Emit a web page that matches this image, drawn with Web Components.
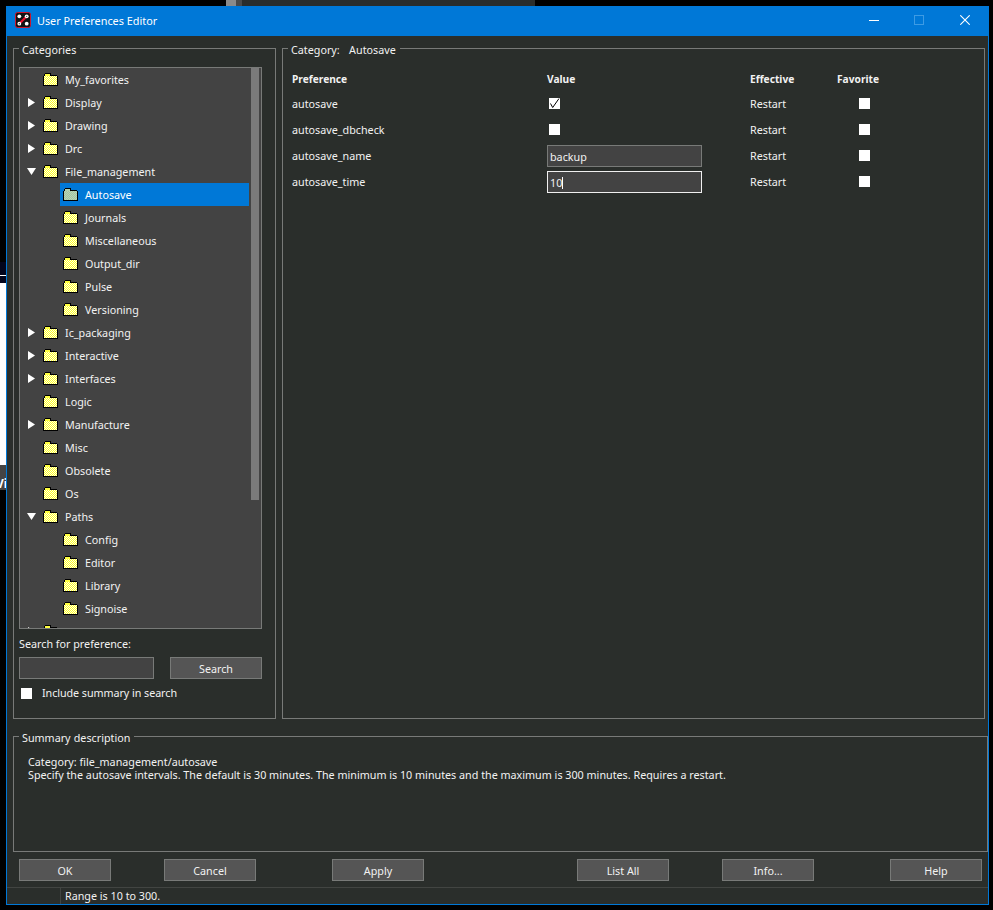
<!DOCTYPE html>
<html>
<head>
<meta charset="utf-8">
<title>User Preferences Editor</title>
<style>
  html, body { margin: 0; height: 100%; background: #000; overflow: hidden; }
  body { font: 10.75px/13px "Noto Sans", "Open Sans", sans-serif; color: #f2f2f2; }
</style>
</head>
<body>
<desktop-scraps></desktop-scraps>
<pref-window heading="User Preferences Editor">
  <group-box slot="left" label="Categories" style="height:678px">
    <cat-tree>
      <tree-row label="My_favorites"></tree-row>
      <tree-row label="Display" arrow="right"></tree-row>
      <tree-row label="Drawing" arrow="right"></tree-row>
      <tree-row label="Drc" arrow="right"></tree-row>
      <tree-row label="File_management" arrow="down"></tree-row>
      <tree-row label="Autosave" nested selected></tree-row>
      <tree-row label="Journals" nested></tree-row>
      <tree-row label="Miscellaneous" nested></tree-row>
      <tree-row label="Output_dir" nested></tree-row>
      <tree-row label="Pulse" nested></tree-row>
      <tree-row label="Versioning" nested></tree-row>
      <tree-row label="Ic_packaging" arrow="right"></tree-row>
      <tree-row label="Interactive" arrow="right"></tree-row>
      <tree-row label="Interfaces" arrow="right"></tree-row>
      <tree-row label="Logic"></tree-row>
      <tree-row label="Manufacture" arrow="right"></tree-row>
      <tree-row label="Misc"></tree-row>
      <tree-row label="Obsolete"></tree-row>
      <tree-row label="Os"></tree-row>
      <tree-row label="Paths" arrow="down"></tree-row>
      <tree-row label="Config" nested></tree-row>
      <tree-row label="Editor" nested></tree-row>
      <tree-row label="Library" nested></tree-row>
      <tree-row label="Signoise" nested></tree-row>
      <tree-row label="" arrow="right"></tree-row>
    </cat-tree>
    <search-panel></search-panel>
  </group-box>

  <group-box slot="right" label="Category:   Autosave" style="height:678px">
    <pref-table>
      <b>Preference</b><b>Value</b><b>Effective</b><b>Favorite</b>

      <span>autosave</span>
      <pref-check checked></pref-check>
      <span>Restart</span>
      <pref-check fav></pref-check>

      <span>autosave_dbcheck</span>
      <pref-check></pref-check>
      <span>Restart</span>
      <pref-check fav></pref-check>

      <span>autosave_name</span>
      <text-box>backup</text-box>
      <span>Restart</span>
      <pref-check fav></pref-check>

      <span>autosave_time</span>
      <text-box focused>10</text-box>
      <span>Restart</span>
      <pref-check fav></pref-check>
    </pref-table>
  </group-box>

  <group-box slot="summary" label="Summary description" style="height:123px">
    <summary-text>
      <div>Category: file_management/autosave</div>
      <div>Specify the autosave intervals. The default is 30 minutes. The minimum is 10 minutes and the maximum is 300 minutes. Requires a restart.</div>
    </summary-text>
  </group-box>

  <pref-button slot="buttons">OK</pref-button>
  <pref-button slot="buttons" style="margin-left:53px">Cancel</pref-button>
  <pref-button slot="buttons" style="margin-left:76px">Apply</pref-button>
  <pref-button slot="buttons" style="margin-left:153px">List All</pref-button>
  <pref-button slot="buttons" style="margin-left:53px">Info...</pref-button>
  <pref-button slot="buttons" style="margin-left:76px">Help</pref-button>

  <span slot="status">Range is 10 to 300.</span>
</pref-window>

<script>
// bits of other windows that stick out behind the dialog
class DesktopScraps extends HTMLElement {
  constructor() {
    super();
    this.attachShadow({ mode: "open" });
    this.shadowRoot.innerHTML = `
      <style>
        :host { display: block; position: absolute; inset: 0; overflow: hidden; }
        div { position: absolute; }
        .vi { left: -4px; top: 477px; width: 12px; height: 14px; overflow: hidden; font: bold 12px/14px "Noto Sans", sans-serif; color: #fff; }
      </style>
      <div style="left:226px;top:0;width:10px;height:6px;background:#8a8a8a"></div>
      <div style="left:236px;top:0;width:6px;height:6px;background:#4a4a4a"></div>
      <div style="left:242px;top:0;width:293px;height:6px;background:#2a2d2b"></div>
      <div style="left:0;top:262px;width:6px;height:21px;background:#03051c"></div>
      <div style="left:0;top:275px;width:6px;height:1px;background:#fff"></div>
      <div style="left:0;top:283px;width:6px;height:182px;background:#fff"></div>
      <div style="left:0;top:465px;width:6px;height:25px;background:#444"></div>
      <div class="vi">Vi</div>
    `;
  }
}
customElements.define("desktop-scraps", DesktopScraps);

class PrefWindow extends HTMLElement {
  constructor() {
    super();
    this.attachShadow({ mode: "open" });
    const template = document.createElement("template");
    template.innerHTML = `
      <style>
        :host {
          display: flex;
          flex-direction: column;
          position: relative;
          box-sizing: border-box;
          width: 983px;
          height: 899px;
          margin: 6px 0 0 6px;
          background: #2a2e2b;
          border: 1px solid #0078d7;
          border-top: 0;
        }
        .title {
          display: flex;
          align-items: center;
          height: 31px;
          margin: 0 -1px;
          padding-left: 9px;
          background: #0078d7;
          color: #fff;
          font-size: 10.85px;
        }
        .title svg.logo { margin-right: 6px; margin-top: -1px; }
        .title .name { flex: 1; }
        .ctl { display: block; margin-top: -2px; }
        .main {
          display: grid;
          grid-template-columns: 263px 703px;
          column-gap: 6px;
          padding: 5px 0 0 6px;
        }
        .summary { padding: 10px 0 0 6px; }
        .buttons { display: flex; padding: 7px 0 0 12px; }
        .status {
          display: flex;
          height: 17px;
          margin-top: 6px;
          border-top: 1px solid #424542;
          line-height: 16px;
        }
        .status .cell { width: 52px; border-right: 1px solid #424542; margin-left: 1px; }
        .status .msg { padding-left: 4px; }
      </style>
      <div class="title">
        <svg class="logo" width="16" height="16" viewBox="0 0 16 16">
          <rect x="0.5" y="0.5" width="15" height="15" rx="2" fill="#111" stroke="#d0142c"/>
          <path d="M12 4 4 12" stroke="#e8102c" stroke-width="2.2"/>
          <circle cx="4.3" cy="4.3" r="1.9" fill="#fff"/>
          <circle cx="11.7" cy="4.3" r="1.9" fill="#fff"/>
          <circle cx="4.3" cy="11.7" r="1.9" fill="#fff"/>
          <circle cx="11.7" cy="11.7" r="1.9" fill="#fff"/>
          <circle cx="11.7" cy="4.3" r=".6" fill="#333"/>
          <circle cx="4.3" cy="11.7" r=".6" fill="#333"/>
        </svg>
        <span class="name"></span>
        <svg class="ctl" width="10" height="10" viewBox="0 0 10 10" style="margin-right:35px"><path d="M0 5.5H10" stroke="#fff"/></svg>
        <svg class="ctl" width="10" height="10" viewBox="0 0 10 10" style="margin-right:36px"><rect x=".5" y=".5" width="9" height="9" fill="none" stroke="#3d9be4"/></svg>
        <svg class="ctl" width="10" height="10" viewBox="0 0 10 10" style="margin-right:19px"><path d="M.3.3 9.7 9.7M9.7.3.3 9.7" stroke="#fff" stroke-width="1.1"/></svg>
      </div>
      <div class="main"><slot name="left"></slot><slot name="right"></slot></div>
      <div class="summary"><slot name="summary"></slot></div>
      <div class="buttons"><slot name="buttons"></slot></div>
      <div class="status"><div class="cell"></div><div class="msg"><slot name="status"></slot></div></div>
    `;
    this.shadowRoot.appendChild(template.content.cloneNode(true));
  }

  connectedCallback() {
    this.shadowRoot.querySelector(".name").textContent = this.getAttribute("heading") || "";
  }
}
customElements.define("pref-window", PrefWindow);

class GroupBox extends HTMLElement {
  constructor() {
    super();
    this.attachShadow({ mode: "open" });
    this.shadowRoot.innerHTML = `
      <style>
        :host { display: block; box-sizing: border-box; }
        fieldset {
          box-sizing: border-box;
          height: 100%;
          min-width: 0;
          margin: 0;
          padding: 0 5px;
          border: 1px solid #787a78;
        }
        legend {
          padding: 2px 4px 0 3px;
          line-height: 14px;
          white-space: pre;
          word-spacing: .35px;
        }
      </style>
      <fieldset><legend></legend><slot></slot></fieldset>
    `;
  }

  connectedCallback() {
    this.shadowRoot.querySelector("legend").textContent = this.getAttribute("label") || "";
  }
}
customElements.define("group-box", GroupBox);

class CatTree extends HTMLElement {
  constructor() {
    super();
    this.attachShadow({ mode: "open" });
    this.shadowRoot.innerHTML = `
      <style>
        :host {
          display: flex;
          box-sizing: border-box;
          width: 243px;
          height: 562px;
          margin-top: 10px;
          background: #434343;
          border: 1px solid #787a78;
          overflow: hidden;
        }
        .rows { flex: 1; min-width: 0; }
        .bar { width: 8px; height: 432px; margin: 0 2px; background: #7a7a7a; }
      </style>
      <div class="rows"><slot></slot></div>
      <div class="bar"></div>
    `;
  }
}
customElements.define("cat-tree", CatTree);

class TreeRow extends HTMLElement {
  constructor() {
    super();
    this.attachShadow({ mode: "open" });
    this.shadowRoot.innerHTML = `
      <style>
        :host {
          display: flex;
          align-items: center;
          box-sizing: border-box;
          height: 23px;
          padding-left: 6px;
        }
        :host([nested]) { margin-left: 40px; padding-left: 3px; }
        :host([selected]) { background: #0078d7; color: #fff; }
        .arrow { width: 11px; height: 11px; margin-right: 6px; }
        :host([nested]) .arrow { display: none; }
        .folder { display: block; margin-right: 7px; }
        .text { margin-top: 2px; }
      </style>
      <svg class="arrow" viewBox="0 0 11 11"></svg>
      <svg class="folder" width="15" height="13" viewBox="0 0 15 13" shape-rendering="crispEdges">
        <defs>
          <pattern id="dither" width="2" height="2" patternUnits="userSpaceOnUse">
            <rect width="2" height="2" class="a"/>
            <rect width="1" height="1" class="b"/>
            <rect x="1" y="1" width="1" height="1" class="b"/>
          </pattern>
        </defs>
        <path d="M2 0H8V2H14V3H15V13H0V3H1V1H2Z" fill="#000"/>
        <rect x="2" y="1" width="5" height="2" class="tab"/>
        <rect x="1" y="3" width="13" height="9" fill="url(#dither)"/>
      </svg>
      <span class="text"></span>
    `;
  }

  connectedCallback() {
    const root = this.shadowRoot;
    root.querySelector(".text").textContent = this.getAttribute("label") || "";
    const arrow = this.getAttribute("arrow");
    if (arrow === "right") root.querySelector(".arrow").innerHTML = '<path d="M2 1 9 5.5 2 10Z" fill="#fff"/>';
    if (arrow === "down") root.querySelector(".arrow").innerHTML = '<path d="M1 2H10L5.5 9Z" fill="#fff"/>';

    // selected row gets the bluish dither, everything else is yellow on white
    const sel = this.hasAttribute("selected");
    root.querySelector(".a").setAttribute("fill", sel ? "#c0d8a8" : "#ffff20");
    root.querySelectorAll(".b").forEach(r => r.setAttribute("fill", sel ? "#98c0b0" : "#fffff0"));
    root.querySelector(".tab").setAttribute("fill", sel ? "#b0d0b0" : "#ffff40");
  }
}
customElements.define("tree-row", TreeRow);

class SearchPanel extends HTMLElement {
  constructor() {
    super();
    this.attachShadow({ mode: "open" });
    this.shadowRoot.innerHTML = `
      <style>
        :host { display: block; padding-top: 9px; }
        .row { display: flex; justify-content: space-between; margin-top: 6px; width: 243px; }
        .field { box-sizing: border-box; width: 135px; height: 22px; background: #434343; border: 1px solid #787a78; }
        .inc { display: flex; align-items: center; margin-top: 8px; padding-left: 2px; }
        .box { width: 11px; height: 11px; margin-right: 10px; background: #fff; }
        .inc span { letter-spacing: -.06px; }
      </style>
      <div>Search for preference:</div>
      <div class="row"><div class="field"></div><pref-button>Search</pref-button></div>
      <div class="inc"><div class="box"></div><span>Include summary in search</span></div>
    `;
  }
}
customElements.define("search-panel", SearchPanel);

class PrefButton extends HTMLElement {
  constructor() {
    super();
    this.attachShadow({ mode: "open" });
    this.shadowRoot.innerHTML = `
      <style>
        :host {
          display: flex;
          align-items: center;
          justify-content: center;
          box-sizing: border-box;
          flex: none;
          width: 92px;
          height: 22px;
          padding-top: 3px;
          background: #555;
          border: 1px solid #787a78;
          color: #f2f2f2;
        }
      </style>
      <slot></slot>
    `;
  }
}
customElements.define("pref-button", PrefButton);

class PrefTable extends HTMLElement {
  constructor() {
    super();
    this.attachShadow({ mode: "open" });
    this.shadowRoot.innerHTML = `
      <style>
        :host {
          display: grid;
          grid-template-columns: 255px 203px 87px 1fr;
          grid-template-rows: 24px repeat(4, 26px);
          align-items: center;
          padding: 11px 0 0 4px;
        }
        ::slotted(b) { font-weight: 700; font-size: 10.2px; }
      </style>
      <slot></slot>
    `;
  }
}
customElements.define("pref-table", PrefTable);

class PrefCheck extends HTMLElement {
  constructor() {
    super();
    this.attachShadow({ mode: "open" });
    this.shadowRoot.innerHTML = `
      <style>
        :host { display: block; width: 11px; height: 11px; margin: -2px 0 0 2px; background: #fff; }
        :host([fav]) { margin-left: 22px; }
        svg { display: block; }
      </style>
    `;
  }

  connectedCallback() {
    if (this.hasAttribute("checked")) {
      this.shadowRoot.innerHTML += '<svg width="11" height="11" viewBox="0 0 11 11"><path d="M1.5 5.5 3.7 9.5 10 .5" fill="none" stroke="#000"/></svg>';
    }
  }
}
customElements.define("pref-check", PrefCheck);

class TextBox extends HTMLElement {
  constructor() {
    super();
    this.attachShadow({ mode: "open" });
    this.shadowRoot.innerHTML = `
      <style>
        :host {
          display: flex;
          align-items: center;
          box-sizing: border-box;
          width: 155px;
          height: 22px;
          margin-top: -2px;
          padding: 3px 0 0 2px;
          background: #434343;
          border: 1px solid #787a78;
        }
        :host([focused]) { border-color: #f0f0f0; }
        .caret { display: none; width: 1px; height: 12px; background: #fff; }
        :host([focused]) .caret { display: block; }
      </style>
      <slot></slot><span class="caret"></span>
    `;
  }
}
customElements.define("text-box", TextBox);

class SummaryText extends HTMLElement {
  constructor() {
    super();
    this.attachShadow({ mode: "open" });
    this.shadowRoot.innerHTML = `
      <style>
        :host { display: block; padding: 11px 0 0 9px; line-height: 13px; }
      </style>
      <slot></slot>
    `;
  }
}
customElements.define("summary-text", SummaryText);
</script>
</body>
</html>
